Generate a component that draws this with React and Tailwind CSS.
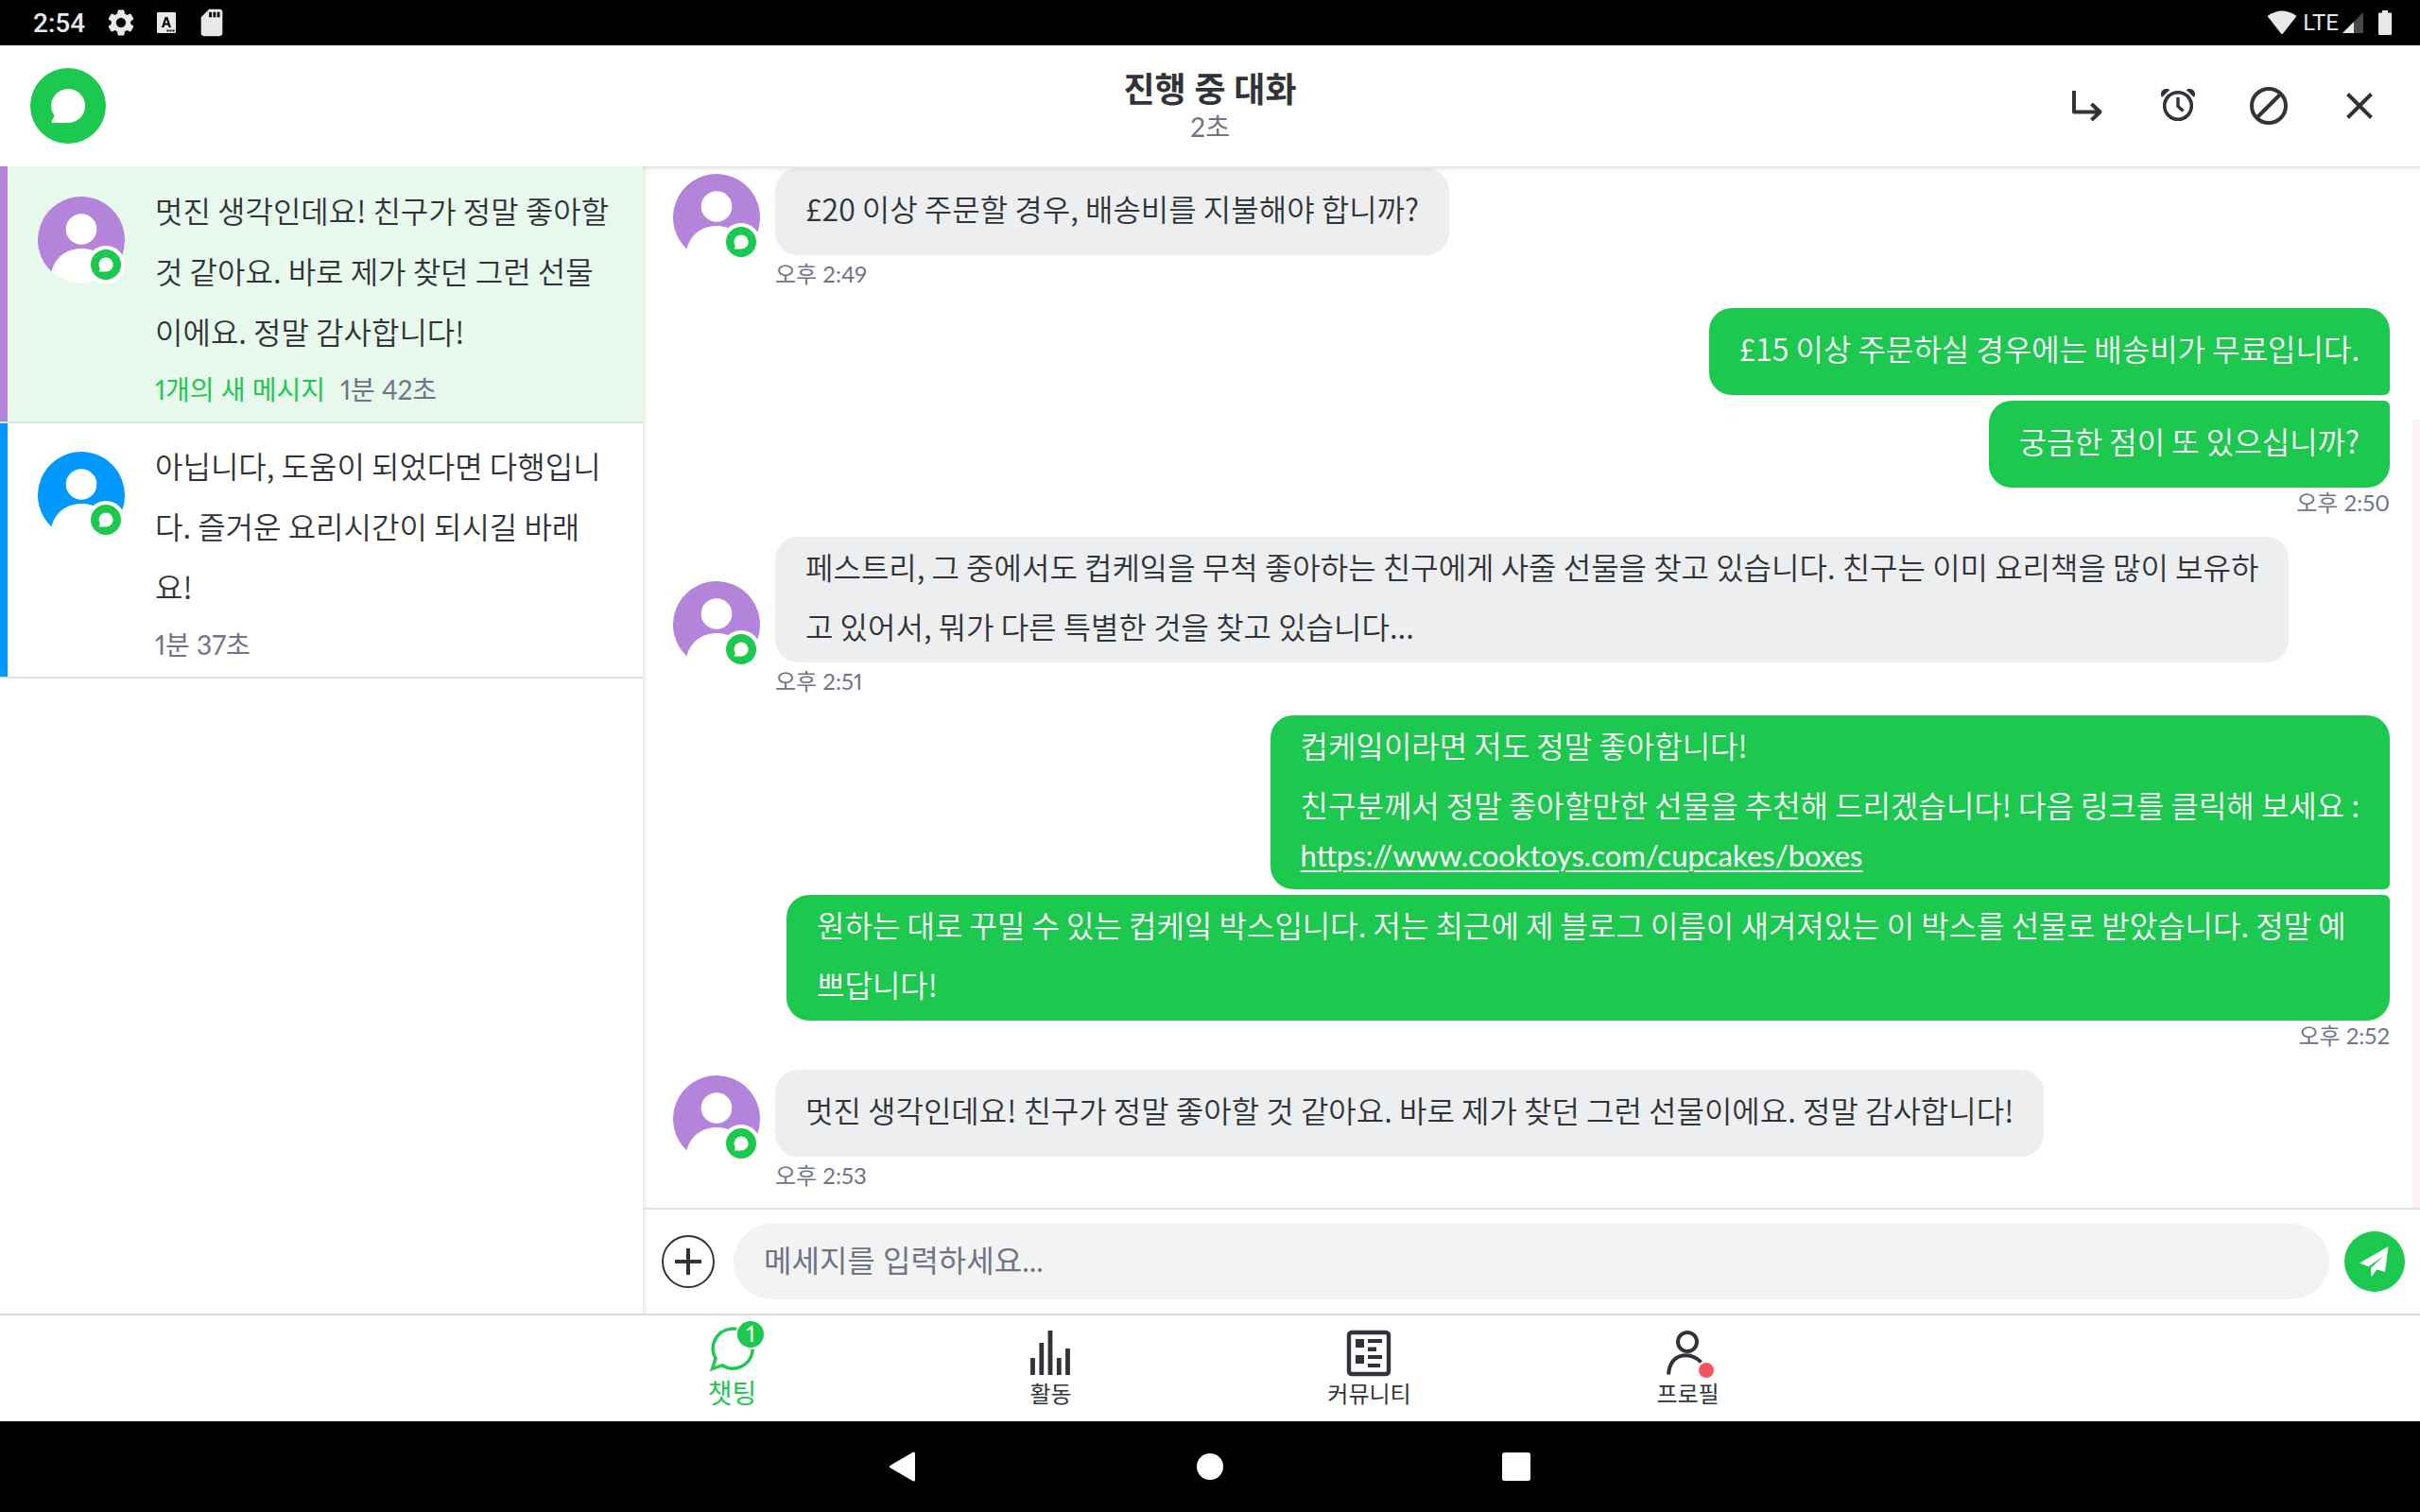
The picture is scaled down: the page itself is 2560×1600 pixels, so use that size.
import React from "react";
import { MdSettings, MdSdCard } from "react-icons/md";

const BLOB = "M0 18A18 18 0 1 0 -14.5 10.5L-17.4 16.6Q-17.6 18 -16.5 18Z";

function Avatar({ color }) {
  return (
    <svg viewBox="0 0 92 92" className="size-[92px] shrink-0" aria-hidden="true">
      <circle cx="46" cy="46" r="45.5" fill="#fff" />
      <path d="M46 0A46 46 0 0 1 92 46Q92 64 80 77C74 63 61 55 46 55C31 55 18 64 14.5 79.5A46 46 0 0 1 46 0Z" fill={color} />
      <circle cx="46" cy="34.5" r="16.3" fill="#fff" />
      <circle cx="72" cy="72" r="20" fill="#fff" />
      <circle cx="72" cy="72" r="16" fill="#1dc84f" />
      <path transform="translate(72 72) scale(0.42)" d={BLOB} fill="#fff" />
    </svg>
  );
}

function StatusBar() {
  return (
    <div className="flex h-12 shrink-0 items-center justify-between bg-black pl-[35px] pr-[30px] font-['Roboto',sans-serif] text-[#e8e8e8]">
      <div className="flex items-center">
        <span className="pt-0.5 text-[28px] font-medium leading-8">2:54</span>
        <MdSettings className="ml-[21px] size-[34px]" />
        <svg viewBox="0 0 20 22" className="ml-[21px] h-[22px] w-5" aria-hidden="true">
          <rect width="20" height="22" rx="1" fill="currentColor" />
          <path d="M8.6 5H11.4L15 16H12.6L11.9 13.6H8.1L7.4 16H5ZM8.7 11.5H11.3L10 7.5Z" fillRule="evenodd" fill="#000" />
          <path d="M10.5 18.5h2v2h-2zM13.5 18.5h2v2h-2zM16.5 18.5h2v2h-2z" fill="#000" />
        </svg>
        <MdSdCard className="ml-[21px] size-[34px]" />
      </div>
      <div className="flex items-center">
        <svg viewBox="0 0 32 26" className="h-[26px] w-8" aria-hidden="true">
          <path d="M0.5 6Q16 -5 31.5 6L17 24.5Q16 25.5 15 24.5Z" fill="currentColor" />
        </svg>
        <span className="ml-1.5 text-2xl leading-8">LTE</span>
        <svg viewBox="0 0 22 22" className="ml-1 h-[22px] w-[22px]" aria-hidden="true">
          <path d="M22 0V22H12V10Z" fill="#484848" />
          <path d="M12 10V22H0Z" fill="currentColor" />
        </svg>
        <svg viewBox="0 0 14 26" className="ml-4 h-[26px] w-[14px]" aria-hidden="true">
          <path d="M4 0H10V2.5H13Q14 2.5 14 3.5V25Q14 26 13 26H1Q0 26 0 25V3.5Q0 2.5 1 2.5H4Z" fill="currentColor" />
        </svg>
      </div>
    </div>
  );
}

function IconButton({ label, children }) {
  return (
    <button type="button" aria-label={label} className="flex size-24 items-center justify-center">
      <svg viewBox="0 0 48 48" className="size-12" fill="none" stroke="#313338" strokeWidth="4">
        {children}
      </svg>
    </button>
  );
}

function Header() {
  return (
    <header className="grid h-32 shrink-0 grid-cols-3 items-center bg-white pl-8 pr-4">
      <svg viewBox="-40 -40 80 80" className="size-20" role="img" aria-label="Chat">
        <circle r="40" fill="#1dc84f" />
        <path d={BLOB} fill="#fff" />
      </svg>
      <div className="flex flex-col items-center pr-4">
        <h1 className="text-4xl font-bold leading-[44px]">진행 중 대화</h1>
        <p className="text-[28px] leading-9 text-[#717487]">2초</p>
      </div>
      <div className="flex justify-end">
        <IconButton label="전달">
          <path d="M10 8V30.5H37M28.5 22L37.5 30.5L28.5 39" strokeLinejoin="round" />
        </IconButton>
        <IconButton label="알림">
          <circle cx="24" cy="24" r="14.3" strokeWidth="3.6" />
          <path d="M24 15V24.5L29.5 29.5" strokeWidth="3.4" />
          <path d="M7 15C3.5 9 9.5 3.5 15.5 7ZM41 15C44.5 9 38.5 3.5 32.5 7Z" fill="#313338" stroke="none" />
        </IconButton>
        <IconButton label="차단">
          <circle cx="24" cy="24" r="18" />
          <path d="M11.5 36.5L36.5 11.5" />
        </IconButton>
        <IconButton label="닫기">
          <path d="M11.5 11.5L36.5 36.5M36.5 11.5L11.5 36.5" />
        </IconButton>
      </div>
    </header>
  );
}

function Sidebar() {
  return (
    <nav className="w-[680px] shrink-0 bg-white">
      <a href="#chat-1" className="flex border-b-2 border-[#dde5e0] bg-[#e7f9ed] pt-0.5 shadow-[inset_8px_0_0_#b484da]">
        <div className="pl-10 pt-[30px]"><Avatar color="#b484da" /></div>
        <div className="pb-2 pl-8 pt-3">
          <p className="font-['Noto_Sans_CJK_KR',sans-serif] text-[32px] font-[350] leading-[64px]">
            멋진 생각인데요! 친구가 정말 좋아할<br />것 같아요. 바로 제가 찾던 그런 선물<br />이에요. 정말 감사합니다!
          </p>
          <p className="flex gap-4 pt-1 text-[28px] leading-[52px] proportional-nums">
            <span className="text-[#1dc84f]">1개의 새 메시지</span>
            <span className="text-[#717487]">1분 42초</span>
          </p>
        </div>
      </a>
      <a href="#chat-2" className="flex border-b-2 border-[#e0e0e2] shadow-[inset_8px_0_0_#0099ff]">
        <div className="pl-10 pt-[30px]"><Avatar color="#0099ff" /></div>
        <div className="pb-2 pl-8 pt-3">
          <p className="font-['Noto_Sans_CJK_KR',sans-serif] text-[32px] font-[350] leading-[64px]">
            아닙니다, 도움이 되었다면 다행입니<br />다. 즐거운 요리시간이 되시길 바래<br />요!
          </p>
          <p className="pt-1 text-[28px] leading-[52px] text-[#717487] proportional-nums">1분 37초</p>
        </div>
      </a>
    </nav>
  );
}

function Received({ time, tall, children }) {
  return (
    <div className="mb-5 grid grid-cols-[92px_1fr] gap-x-4">
      <div className="-mb-1.5 self-end"><Avatar color="#b484da" /></div>
      <div className={"w-fit self-end rounded-3xl bg-[#edeef0] px-8 font-['Noto_Sans_CJK_KR',sans-serif] text-[32px] font-[350] leading-[63px] " + (tall ? "pb-[7px]" : "pb-[18px] pt-[11px]")}>{children}</div>
      <time className="col-start-2 mt-1 text-2xl leading-8 text-[#717487] proportional-nums">{time}</time>
    </div>
  );
}

function SentGroup({ time, children }) {
  return (
    <div className="mb-5 flex flex-col items-end">
      <div className="flex flex-col items-end gap-1.5">{children}</div>
      <time className="text-2xl leading-8 text-[#717487] proportional-nums">{time}</time>
    </div>
  );
}

const sent = "max-w-[1696px] rounded-3xl bg-[#1dc84f] px-8 font-['Noto_Sans_CJK_KR',sans-serif] text-[32px] font-[350] leading-[63px] text-white ";

function Messages() {
  return (
    <div className="relative min-h-0 flex-1 overflow-hidden">
      <div className="px-8 pt-0.5">
        <Received time="오후 2:49">£20 이상 주문할 경우, 배송비를 지불해야 합니까?</Received>
        <SentGroup time="오후 2:50">
          <div className={sent + "rounded-br-md pb-[18px] pt-[11px]"}>£15 이상 주문하실 경우에는 배송비가 무료입니다.</div>
          <div className={sent + "rounded-tr-md pb-[18px] pt-[11px]"}>궁금한 점이 또 있으십니까?</div>
        </SentGroup>
        <Received time="오후 2:51" tall>
          페스트리, 그 중에서도 컵케잌을 무척 좋아하는 친구에게 사줄 선물을 찾고 있습니다. 친구는 이미 요리책을 많이 보유하<br />고 있어서, 뭐가 다른 특별한 것을 찾고 있습니다...
        </Received>
        <SentGroup time="오후 2:52">
          <div className={sent + "rounded-br-md pb-[14px]"}>
            컵케잌이라면 저도 정말 좋아합니다!<br />
            친구분께서 정말 좋아할만한 선물을 추천해 드리겠습니다! 다음 링크를 클릭해 보세요 :<br />
            <a href="https://www.cooktoys.com/cupcakes/boxes" className="block w-fit font-['Lato',sans-serif] text-[31px] font-normal leading-[44px] underline decoration-2 underline-offset-4">https://www.cooktoys.com/cupcakes/boxes</a>
          </div>
          <div className={sent + "rounded-tr-md pb-[7px]"}>
            원하는 대로 꾸밀 수 있는 컵케잌 박스입니다. 저는 최근에 제 블로그 이름이 새겨져있는 이 박스를 선물로 받았습니다. 정말 예쁘답니다!
          </div>
        </SentGroup>
        <Received time="오후 2:53">멋진 생각인데요! 친구가 정말 좋아할 것 같아요. 바로 제가 찾던 그런 선물이에요. 정말 감사합니다!</Received>
      </div>
      <div className="absolute inset-x-0 top-0 h-1.5 bg-linear-to-b from-black/10 to-transparent" />
      <div className="absolute bottom-0 right-0 top-[268px] w-2 bg-[#fdf3f5]" />
    </div>
  );
}

function Composer() {
  return (
    <form className="flex h-28 shrink-0 items-center border-t-2 border-[#e0e0e2] pl-5 pr-4" onSubmit={(e) => e.preventDefault()}>
      <button type="button" aria-label="추가" className="flex size-14 shrink-0 items-center justify-center rounded-full border-2 border-[#313338]">
        <svg viewBox="0 0 28 28" className="size-7" stroke="#313338" strokeWidth="4"><path d="M14 0V28M0 14H28" /></svg>
      </button>
      <input aria-label="메세지" placeholder="메세지를 입력하세요..." className="ml-5 h-20 min-w-0 flex-1 rounded-full bg-[#f3f3f3] px-8 pb-1 text-[32px] placeholder:text-[#717487]" />
      <button type="submit" aria-label="보내기" className="ml-4 size-16 shrink-0">
        <svg viewBox="0 0 64 64" className="size-16">
          <circle cx="32" cy="32" r="32" fill="#1dc84f" />
          <path d="M46.5 16L16 33.5L25.5 37.3L41 26.5L28 38.8L28.5 48L34.5 40.5L43 43Z" fill="#fff" />
        </svg>
      </button>
    </form>
  );
}

function Tab({ label, active, children }) {
  return (
    <button type="button" className={"flex flex-col items-center pt-2 " + (active ? "text-[28px] text-[#1dc84f]" : "text-2xl")}>
      <svg viewBox="0 0 72 60" className="h-[60px] w-[72px] overflow-visible" fill="none" aria-hidden="true">{children}</svg>
      <span className={active ? "leading-7" : "leading-[30px]"}>{label}</span>
    </button>
  );
}

function TabBar() {
  return (
    <nav className="flex h-[114px] shrink-0 justify-center border-t-2 border-[#dadada] bg-white">
      <div className="grid w-full max-w-[1348px] grid-cols-4">
        <Tab label="챗팅" active>
          <path transform="translate(36.5 27)" d="M-11.5 17.8A21 21 0 1 0 -18.5 10.5L-22 21.5Z" stroke="#1dc84f" strokeWidth="3.4" />
          <circle cx="55" cy="12" r="16" fill="#fff" />
          <circle cx="55" cy="12" r="14" fill="#1dc84f" />
          <text x="55" y="20" textAnchor="middle" fontSize="24" fill="#fff" className="proportional-nums">1</text>
        </Tab>
        <Tab label="활동">
          <path d="M16.5 55V37M25.8 55V21M35 55V8M44.3 55V37M53.5 55V27" stroke="#313338" strokeWidth="4.8" />
        </Tab>
        <Tab label="커뮤니티">
          <rect x="14" y="10" width="42" height="44" rx="3" stroke="#313338" strokeWidth="4.4" />
          <path d="M21 17h9v9h-9zM21 34h9v9h-9zM34 17h15v4h-15zM34 25.5h9v4.5h-9zM34 34h15v4h-15zM34 43h13v4h-13z" fill="#313338" />
        </Tab>
        <Tab label="프로필">
          <circle cx="35" cy="20" r="10" stroke="#313338" strokeWidth="4" />
          <path d="M15 54.5C17 29 41 31 49.5 41.5" stroke="#313338" strokeWidth="4" />
          <circle cx="55" cy="50" r="8" fill="#f4565f" />
        </Tab>
      </div>
    </nav>
  );
}

function SystemNav() {
  return (
    <div className="flex h-24 shrink-0 items-center justify-center gap-[292px] bg-black">
      <button type="button" aria-label="Back">
        <svg viewBox="0 0 32 32" className="size-8"><path d="M26.5 2V30L2.5 16Z" fill="#fff" stroke="#fff" strokeWidth="3" strokeLinejoin="round" /></svg>
      </button>
      <button type="button" aria-label="Home">
        <svg viewBox="0 0 32 32" className="size-8"><circle cx="16" cy="16" r="14" fill="#fff" /></svg>
      </button>
      <button type="button" aria-label="Recents">
        <svg viewBox="0 0 32 32" className="size-8"><rect x="1" y="1" width="30" height="30" rx="2.5" fill="#fff" /></svg>
      </button>
    </div>
  );
}

export default function App() {
  return (
    <div className="flex h-screen flex-col bg-white font-['Lato','Noto_Sans_CJK_KR',sans-serif] text-[#313338]">
      <StatusBar />
      <Header />
      <div className="flex min-h-0 flex-1">
        <Sidebar />
        <div className="w-1.5 shrink-0 bg-linear-to-r from-[#ececec] to-white" />
        <main className="-ml-1.5 flex min-w-0 flex-1 flex-col">
          <Messages />
          <Composer />
        </main>
      </div>
      <TabBar />
      <SystemNav />
    </div>
  );
}
